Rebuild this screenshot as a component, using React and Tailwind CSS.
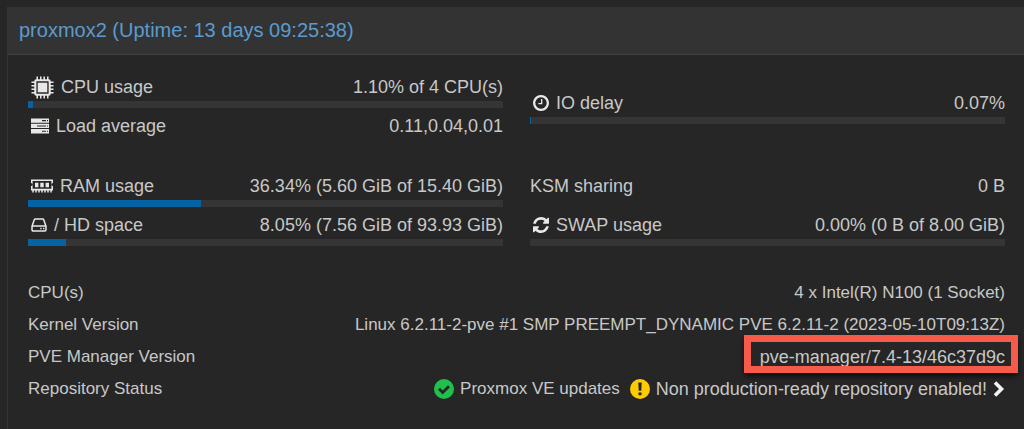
const CpuIcon = () => (
  <svg className="w-[23px] h-[23px] shrink-0" viewBox="0 0 24 24" fill="none" stroke="currentColor" aria-hidden="true">
    <path strokeWidth="1.600" d="M6.500 0.500v4M10.200 0.500v4M13.800 0.500v4M17.500 0.500v4M6.500 19.500v4M10.200 19.500v4M13.800 19.500v4M17.500 19.500v4M0.500 6.500h4M0.500 10.200h4M0.500 13.800h4M0.500 17.500h4M19.500 6.500h4M19.500 10.200h4M19.500 13.800h4M19.500 17.500h4" />
    <rect x="4.500" y="4.500" width="15" height="15" rx="1" strokeWidth="2.200" />
    <rect x="7" y="7" width="10" height="10" fill="currentColor" stroke="none" />
  </svg>
);

const ServerIcon = () => (
  <svg className="w-[18px] h-4 shrink-0" viewBox="0 0 18 16" fill="currentColor" aria-hidden="true">
    <path d="M0 .5h18v4.300H0zM0 5.800h18v4.300H0zM0 11.100h18v4.300H0z" />
    <path stroke="#262626" strokeWidth="1.100" d="M11 2.650h4M6 7.950h9M11 13.250h4M16 2.650h1M16 7.950h1M16 13.250h1" />
  </svg>
);

const RamIcon = () => (
  <svg className="w-[22px] h-4 shrink-0" viewBox="0 0 22 16" fill="currentColor" aria-hidden="true">
    <path fillRule="evenodd" d="M0 1.500h22V5a1.500 1.500 0 0 0 0 3v4.500H0V8a1.500 1.500 0 0 0 0-3zM1.600 3.100v7.600h18.800V3.100z" />
    <path d="M4 4.800h3.400v4.400H4zM9.300 4.800h3.400v4.400H9.300zM14.600 4.800H18v4.400h-3.400z" />
    <path stroke="currentColor" strokeWidth="1.500" d="M2 12v2.500M5 12v2.500M8 12v2.500M11 12v2.500M14 12v2.500M17 12v2.500M20 12v2.500" />
  </svg>
);

const HddIcon = () => (
  <svg className="w-4 h-4 shrink-0" viewBox="0 0 16 16" fill="none" stroke="currentColor" strokeWidth="1.500" aria-hidden="true">
    <path strokeLinejoin="round" d="M1 9.200L3.200 2.900Q3.500 2 4.400 2h7.200q.9 0 1.200.9L15 9.200v3.600q0 1.200-1.200 1.200H2.200Q1 14 1 12.800zM1 9h14" />
    <path d="M9.200 11.500h1.400M12 11.500h1.400" />
  </svg>
);

const ClockIcon = () => (
  <svg className="w-4 h-4 shrink-0" viewBox="128 128 1536 1536" fill="currentColor" aria-hidden="true">
    <path d="M1024 544v448q0 14-9 23t-23 9h-320q-14 0-23-9t-9-23v-64q0-14 9-23t23-9h224v-352q0-14 9-23t23-9h64q14 0 23 9t9 23zm416 352q0-148-73-273t-198-198-273-73-273 73-198 198-73 273 73 273 198 198 273 73 273-73 198-198 73-273zm224 0q0 209-103 385.500t-279.500 279.500-385.500 103-385.500-103-279.500-279.500-103-385.500 103-385.500 279.500-279.500 385.500-103 385.500 103 279.500 279.500 103 385.500z" />
  </svg>
);

const RefreshIcon = () => (
  <svg className="w-4 h-4 shrink-0" viewBox="0 0 1536 1536" fill="currentColor" aria-hidden="true">
    <path d="M1511 928q0 5-1 7-64 268-268 434.500t-478 166.500q-146 0-282.500-55t-243.500-157l-129 129q-19 19-45 19t-45-19-19-45v-448q0-26 19-45t45-19h448q26 0 45 19t19 45-19 45l-137 137q71 66 161 102t187 36q134 0 250-65t186-179q11-17 53-117 8-23 30-23h192q13 0 22.500 9.500t9.500 22.500zm25-800v448q0 26-19 45t-45 19h-448q-26 0-45-19t-19-45 19-45l138-138q-148-137-349-137-134 0-250 65t-186 179q-11 17-53 117-8 23-30 23h-199q-13 0-22.500-9.500t-9.500-22.500v-7q65-268 270-434.500t480-166.500q146 0 284 55.500t245 156.500l130-129q19-19 45-19t45 19 19 45z" />
  </svg>
);

const CheckIcon = () => (
  <svg className="w-5 h-5 shrink-0" viewBox="0 0 20 20" aria-hidden="true">
    <circle cx="10" cy="10" r="10" fill="#21bf4b" />
    <path d="M5 9.800l3.700 3.700L15 7.200" fill="none" stroke="#262626" strokeWidth="2.800" />
  </svg>
);

const WarningIcon = () => (
  <svg className="w-5 h-5 shrink-0" viewBox="0 0 20 20" aria-hidden="true">
    <circle cx="10" cy="10" r="10" fill="#fc0" />
    <path d="M8.300 3.500h3.400l-.4 8.300H8.700zM8.500 13.500h3v2.800h-3z" fill="#262626" />
  </svg>
);

const ChevronIcon = () => (
  <svg className="w-3 h-4 shrink-0" viewBox="0 0 12 16" aria-hidden="true">
    <path d="M2 1.500L8.500 8 2 14.500" fill="none" stroke="#f2f2f2" strokeWidth="3.600" />
  </svg>
);

// Linha de uso: rótulo, valor e barra opcional
const Usage = ({ icon, label, value, percent }) => (
  <div>
    <div className="flex h-7 items-center justify-between">
      <span className="flex items-center gap-[7px]">
        {icon && <span className="pl-[3px] text-[#e8e8e8]">{icon}</span>}
        {label}
      </span>
      <span>{value}</span>
    </div>
    {percent !== undefined && (
      <div className="h-[7px] bg-[#353535]" role="progressbar" aria-label={label} aria-valuenow={percent}>
        <div className="h-full bg-[#0562a3]" style={{ width: `${percent}%` }} />
      </div>
    )}
  </div>
);

const InfoRow = ({ label, children }) => (
  <div className="flex h-8 items-center justify-between">
    <dt>{label}</dt>
    <dd>{children}</dd>
  </div>
);

export default function App() {
  return (
    <div className="flex min-h-screen flex-col bg-[#262626] pl-[7px] pt-[7px] font-['Liberation_Sans',Arial,sans-serif] text-[18px] text-[#c8c8c8]">
      <section className="grow border-l border-[#353535]">
        <header className="flex h-12 items-center border-b border-[#404040] bg-[#333] pb-0.5 pl-[11px]">
          <h1 className="text-[20px] text-[#5a9bce]">proxmox2 (Uptime: 13 days 09:25:38)</h1>
        </header>

        <div className="pl-5 pr-[19px] pt-[18px]">
          {/* CPU e IO */}
          <div className="grid grid-cols-2 items-center gap-x-[27px]">
            <div className="flex flex-col gap-1">
              <Usage icon={<CpuIcon />} label="CPU usage" value="1.10% of 4 CPU(s)" percent={1.1} />
              <Usage icon={<ServerIcon />} label="Load average" value="0.11,0.04,0.01" />
            </div>
            <Usage icon={<ClockIcon />} label="IO delay" value="0.07%" percent={0.07} />
          </div>

          {/* Memória e disco */}
          <div className="mt-8 grid grid-cols-2 gap-x-[27px]">
            <div className="flex flex-col gap-1">
              <Usage icon={<RamIcon />} label="RAM usage" value="36.34% (5.60 GiB of 15.40 GiB)" percent={36.34} />
              <Usage icon={<HddIcon />} label="/ HD space" value="8.05% (7.56 GiB of 93.93 GiB)" percent={8.05} />
            </div>
            <div className="flex flex-col justify-between">
              <Usage label="KSM sharing" value="0 B" />
              <Usage icon={<RefreshIcon />} label="SWAP usage" value="0.00% (0 B of 8.00 GiB)" percent={0} />
            </div>
          </div>

          {/* Versões */}
          <dl className="mt-[31px] text-[17px]">
            <InfoRow label="CPU(s)">4 x Intel(R) N100 (1 Socket)</InfoRow>
            <InfoRow label="Kernel Version">
              Linux 6.2.11-2-pve #1 SMP PREEMPT_DYNAMIC PVE 6.2.11-2 (2023-05-10T09:13Z)
            </InfoRow>
            <InfoRow label="PVE Manager Version">
              <span className="relative text-[18px]">
                pve-manager/7.4-13/46c37d9c
                <span className="absolute -bottom-1.5 -left-4 -right-[13px] -top-3 border-[7px] border-[#f55a4b] shadow-md shadow-black/60" />
              </span>
            </InfoRow>
            <InfoRow label="Repository Status">
              <span className="flex items-center gap-1.5">
                <CheckIcon />
                <span className="mr-1">Proxmox VE updates</span>
                <WarningIcon />
                <span className="text-[18px]">Non production-ready repository enabled!</span>
                <ChevronIcon />
              </span>
            </InfoRow>
          </dl>
        </div>
      </section>
    </div>
  );
}
